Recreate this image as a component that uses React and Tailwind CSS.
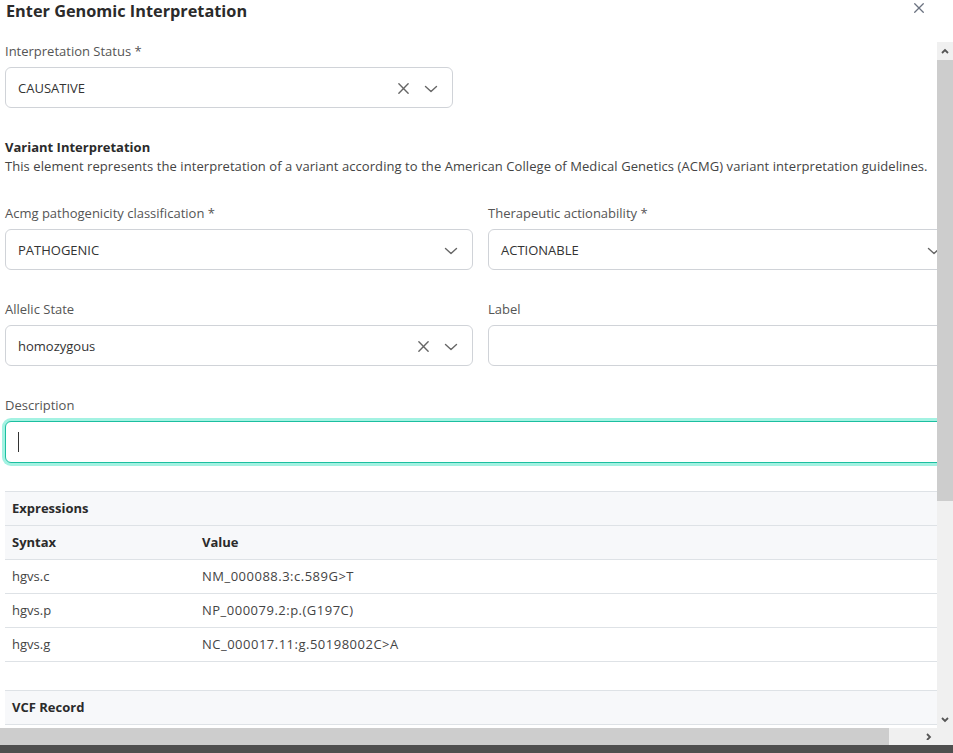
import React from 'react';

const font = { fontFamily: '"Open Sans", "Noto Sans", sans-serif' };

function XIcon({ className = '' }) {
  return (
    <svg viewBox="0 0 14 14" className={className} fill="none" stroke="currentColor" strokeWidth="1.5" strokeLinecap="round">
      <path d="M2 2l10 10M12 2L2 12" />
    </svg>
  );
}

function Chevron({ className = '' }) {
  return (
    <svg viewBox="0 0 14 8" className={className} fill="none" stroke="currentColor" strokeWidth="1.4" strokeLinecap="round" strokeLinejoin="round">
      <path d="M1.5 1.5l5.5 5 5.5-5" />
    </svg>
  );
}

// fake select box with optional clear button
function Select({ value, clearable, className = '' }) {
  return (
    <div className={`flex h-[41px] items-center rounded-[6px] border border-[#d0d3d8] bg-white pl-[12px] pr-[14px] pt-[2px] ${className}`}>
      <span className="mr-auto text-[13px] text-[#333]">{value}</span>
      {clearable && <XIcon className="mr-[14px] h-[13px] w-[13px] text-[#666]" />}
      <Chevron className="h-[8px] w-[14px] text-[#666]" />
    </div>
  );
}

function Field({ label, children, className = '' }) {
  return (
    <div className={className}>
      <div className="mb-[7px] text-[13px] leading-[18px] text-[#555]">{label}</div>
      {children}
    </div>
  );
}

const expressions = [
  ['hgvs.c', 'NM_000088.3:c.589G>T'],
  ['hgvs.p', 'NP_000079.2:p.(G197C)'],
  ['hgvs.g', 'NC_000017.11:g.50198002C>A'],
];

function Caret({ dir }) {
  const d = {
    up: 'M1 5l3-3 3 3',
    down: 'M1 2l3 3 3-3',
    right: 'M2 1l3 3-3 3',
  }[dir];
  return (
    <svg viewBox="0 0 8 7" className="h-[7px] w-[8px] text-[#555]" fill="none" stroke="currentColor" strokeWidth="1.8">
      <path d={d} />
    </svg>
  );
}

export default function App() {
  return (
    <div className="relative flex h-[753px] w-[953px] flex-col overflow-hidden bg-white" style={font}>
      <div className="relative h-[42px] shrink-0 pl-[6px]">
        <h2 className="text-[16.3px] font-bold leading-[22px] text-[#2b2b2b]">Enter Genomic Interpretation</h2>
        <button className="absolute right-[28px] top-[2px] text-[#6b7280]">
          <XIcon className="h-[12px] w-[12px]" />
        </button>
      </div>

      <div className="flex h-[686px] shrink-0">
        <div className="w-[937px] shrink-0 overflow-hidden">
          <div className="w-[956px] pl-[5px] text-[#333]">
            <Field label="Interpretation Status *">
              <Select value="CAUSATIVE" clearable className="w-[448px]" />
            </Field>

            <div className="mt-[30px] text-[13px] leading-[19px]">
              <div className="font-bold text-[#2b2b2b]">Variant Interpretation</div>
              <div className="tracking-[0.07px] text-[#444]">
                This element represents the interpretation of a variant according to the American College of Medical Genetics (ACMG) variant interpretation guidelines.
              </div>
            </div>

            <div className="mt-[28px] grid grid-cols-2 gap-x-[15px]">
              <Field label="Acmg pathogenicity classification *">
                <Select value="PATHOGENIC" />
              </Field>
              <Field label="Therapeutic actionability *">
                <Select value="ACTIONABLE" />
              </Field>
            </div>

            <div className="mt-[30px] grid grid-cols-2 gap-x-[15px]">
              <Field label="Allelic State">
                <Select value="homozygous" clearable />
              </Field>
              <Field label="Label">
                <div className="h-[41px] rounded-[6px] border border-[#d0d3d8] bg-white" />
              </Field>
            </div>

            <Field label="Description" className="mt-[30px]">
              <div className="flex h-[42px] items-center rounded-[6px] border border-[#1cbfa0] bg-white pl-[12px] shadow-[0_0_0_3px_#a3f2e2]">
                <span className="h-[20px] w-px bg-[#333]" />
              </div>
            </Field>

            <div className="mt-[28px] text-[13px]">
              <div className="flex h-[35px] items-center border-y border-[#dee2e6] bg-[#f7f8fa] px-[7px] font-bold text-[#2b2b2b]">
                Expressions
              </div>
              <div className="flex h-[34px] items-center border-b border-[#dee2e6] bg-[#f7f8fa] px-[7px] font-bold text-[#2b2b2b]">
                <span className="w-[190px]">Syntax</span>
                <span>Value</span>
              </div>
              {expressions.map(([k, v]) => (
                <div key={k} className="flex h-[34px] items-center border-b border-[#dee2e6] px-[7px] text-[#444]">
                  <span className="w-[190px]">{k}</span>
                  <span className="tracking-[0.5px]">{v}</span>
                </div>
              ))}
            </div>

            <div className="mt-[28px] text-[13px]">
              <div className="flex h-[35px] items-center border-y border-[#dee2e6] bg-[#f7f8fa] px-[7px] font-bold text-[#2b2b2b]">
                VCF Record
              </div>
            </div>
          </div>
        </div>

        {/* vertical scrollbar */}
        <div className="flex w-[16px] shrink-0 flex-col bg-[#f0f0f0]">
          <div className="flex h-[18px] items-center justify-center">
            <Caret dir="up" />
          </div>
          <div className="h-[441px] bg-[#cdcdcd]" />
          <div className="mt-auto flex h-[17px] items-center justify-center">
            <Caret dir="down" />
          </div>
        </div>
      </div>

      {/* horizontal scrollbar */}
      <div className="flex h-[17px] shrink-0 bg-[#f0f0f0]">
        <div className="w-[889px] bg-[#cdcdcd]" />
        <div className="flex w-[48px] items-center justify-end pr-[4px]">
          <Caret dir="right" />
        </div>
      </div>
      <div className="flex-1 bg-[#4f4f4f]" />
    </div>
  );
}
